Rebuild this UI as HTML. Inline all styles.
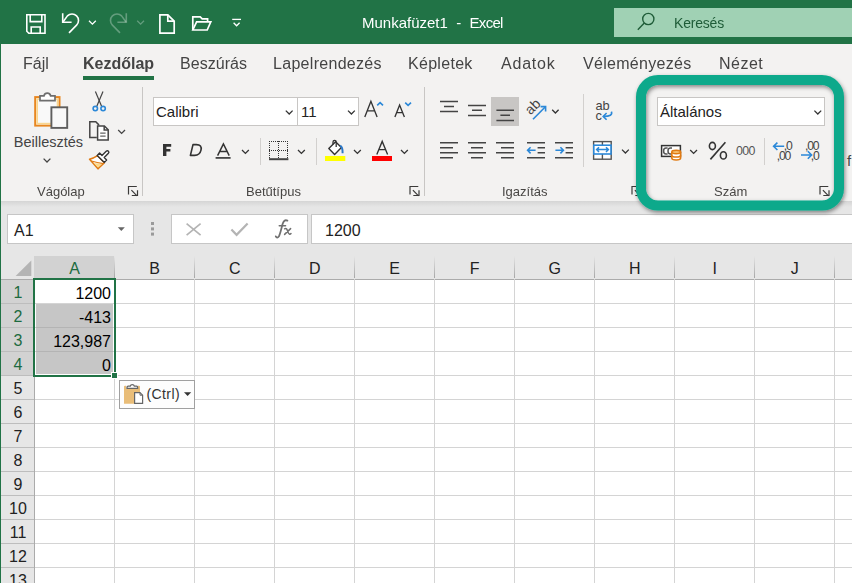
<!DOCTYPE html>
<html><head><meta charset="utf-8">
<style>
*{margin:0;padding:0;box-sizing:border-box}
html,body{width:852px;height:583px;overflow:hidden;background:#fff;font-family:"Liberation Sans",sans-serif;position:relative}
.a{position:absolute}
.t{position:absolute;white-space:nowrap;line-height:1}
svg{position:absolute;overflow:visible}
#title{left:0;top:0;width:852px;height:44px;background:#217346}
#rib{left:0;top:44px;width:852px;height:157px;background:#f3f2f1}
#fbar{left:0;top:201px;width:852px;height:55px;background:#e6e6e6}
#shadow{left:0;top:201px;width:852px;height:6px;background:linear-gradient(#d5d5d5,#e6e6e6)}
#lb{left:0;top:44px;width:1px;height:539px;background:#217346}
.tab{font-size:16px;color:#444;letter-spacing:0.3px;will-change:transform}
.lbl{font-size:13px;color:#484644;will-change:transform}
.box{background:#fff;border:1px solid #c8c6c4}
.sep{background:#c8c6c4;width:1px}
.gsep{background:#c8c6c4;width:1px}
</style></head><body>
<div id="title" class="a"></div>
<div id="rib" class="a"></div>
<div id="fbar" class="a"></div>
<div id="shadow" class="a"></div>

<!-- title bar -->
<div class="a" style="left:614px;top:8px;width:238px;height:29px;background:#a0d1b4"></div>

<!-- tabs -->
<div class="a" style="left:83px;top:76px;width:71px;height:4px;background:#217346"></div>

<!-- group separators -->
<div class="a gsep" style="left:142px;top:87px;height:109px"></div>
<div class="a gsep" style="left:424px;top:87px;height:109px"></div>

<!-- group labels -->

<!-- Font group boxes -->
<div class="a box" style="left:153px;top:97px;width:145px;height:29px"></div>
<div class="t" style="left:156px;top:104px;font-size:15px;color:#222">Calibri</div>
<div class="a box" style="left:297px;top:97px;width:62px;height:29px"></div>
<div class="t" style="left:301px;top:104px;font-size:15px;color:#222">11</div>

<!-- Number format box -->
<div class="a box" style="left:657px;top:97px;width:168px;height:29px"></div>
<div class="t" style="left:660px;top:104px;font-size:15px;color:#222">Általános</div>

<!-- formula bar -->
<div class="a box" style="left:7px;top:214px;width:127px;height:30px;border-color:#c6c6c6"></div>
<div class="t" style="left:14px;top:223px;font-size:16px;color:#222">A1</div>
<div class="a box" style="left:171px;top:214px;width:137px;height:30px;border-color:#c6c6c6"></div>
<div class="a box" style="left:311px;top:214px;width:560px;height:30px;border-color:#c6c6c6"></div>
<div class="t" style="left:325px;top:223px;font-size:16px;color:#222">1200</div>

<!-- grid placeholder -->
<div class="a" style="left:0;top:256px;width:852px;height:327px;background:#fff"></div>
<div class="a" style="left:0;top:256px;width:852px;height:23px;background:#e6e6e6"></div>
<div class="a" style="left:34px;top:256px;width:80px;height:22px;background:#d2d2d2"></div>
<div class="a" style="left:0;top:279px;width:35px;height:304px;background:#e6e6e6"></div>
<div class="a" style="left:0;top:280px;width:34px;height:95px;background:#d2d2d2"></div>
<div class="a" style="left:0;top:279px;width:852px;height:1px;background:#ababab"></div>
<div class="a" style="left:34px;top:279px;width:1px;height:304px;background:#ababab"></div>
<svg class="a" style="left:0;top:0" width="852" height="583"><path d="M31.3,260.6 V276 H15.6 Z" fill="#b4b4b4"/></svg>
<div class="a" style="left:114px;top:279px;width:1px;height:304px;background:#d4d4d4"></div>
<div class="a" style="left:114px;top:256px;width:1px;height:22px;background:linear-gradient(#e6e6e6,#a6a6a6)"></div>
<div class="a" style="left:194px;top:279px;width:1px;height:304px;background:#d4d4d4"></div>
<div class="a" style="left:194px;top:256px;width:1px;height:22px;background:linear-gradient(#e6e6e6,#a6a6a6)"></div>
<div class="a" style="left:274px;top:279px;width:1px;height:304px;background:#d4d4d4"></div>
<div class="a" style="left:274px;top:256px;width:1px;height:22px;background:linear-gradient(#e6e6e6,#a6a6a6)"></div>
<div class="a" style="left:354px;top:279px;width:1px;height:304px;background:#d4d4d4"></div>
<div class="a" style="left:354px;top:256px;width:1px;height:22px;background:linear-gradient(#e6e6e6,#a6a6a6)"></div>
<div class="a" style="left:434px;top:279px;width:1px;height:304px;background:#d4d4d4"></div>
<div class="a" style="left:434px;top:256px;width:1px;height:22px;background:linear-gradient(#e6e6e6,#a6a6a6)"></div>
<div class="a" style="left:514px;top:279px;width:1px;height:304px;background:#d4d4d4"></div>
<div class="a" style="left:514px;top:256px;width:1px;height:22px;background:linear-gradient(#e6e6e6,#a6a6a6)"></div>
<div class="a" style="left:594px;top:279px;width:1px;height:304px;background:#d4d4d4"></div>
<div class="a" style="left:594px;top:256px;width:1px;height:22px;background:linear-gradient(#e6e6e6,#a6a6a6)"></div>
<div class="a" style="left:674px;top:279px;width:1px;height:304px;background:#d4d4d4"></div>
<div class="a" style="left:674px;top:256px;width:1px;height:22px;background:linear-gradient(#e6e6e6,#a6a6a6)"></div>
<div class="a" style="left:754px;top:279px;width:1px;height:304px;background:#d4d4d4"></div>
<div class="a" style="left:754px;top:256px;width:1px;height:22px;background:linear-gradient(#e6e6e6,#a6a6a6)"></div>
<div class="a" style="left:834px;top:279px;width:1px;height:304px;background:#d4d4d4"></div>
<div class="a" style="left:834px;top:256px;width:1px;height:22px;background:linear-gradient(#e6e6e6,#a6a6a6)"></div>
<div class="a" style="left:35px;top:303px;width:817px;height:1px;background:#d4d4d4"></div>
<div class="a" style="left:0;top:303px;width:34px;height:1px;background:#bdbdbd"></div>
<div class="a" style="left:35px;top:327px;width:817px;height:1px;background:#d4d4d4"></div>
<div class="a" style="left:0;top:327px;width:34px;height:1px;background:#bdbdbd"></div>
<div class="a" style="left:35px;top:351px;width:817px;height:1px;background:#d4d4d4"></div>
<div class="a" style="left:0;top:351px;width:34px;height:1px;background:#bdbdbd"></div>
<div class="a" style="left:35px;top:375px;width:817px;height:1px;background:#d4d4d4"></div>
<div class="a" style="left:0;top:375px;width:34px;height:1px;background:#bdbdbd"></div>
<div class="a" style="left:35px;top:399px;width:817px;height:1px;background:#d4d4d4"></div>
<div class="a" style="left:0;top:399px;width:34px;height:1px;background:#bdbdbd"></div>
<div class="a" style="left:35px;top:423px;width:817px;height:1px;background:#d4d4d4"></div>
<div class="a" style="left:0;top:423px;width:34px;height:1px;background:#bdbdbd"></div>
<div class="a" style="left:35px;top:447px;width:817px;height:1px;background:#d4d4d4"></div>
<div class="a" style="left:0;top:447px;width:34px;height:1px;background:#bdbdbd"></div>
<div class="a" style="left:35px;top:471px;width:817px;height:1px;background:#d4d4d4"></div>
<div class="a" style="left:0;top:471px;width:34px;height:1px;background:#bdbdbd"></div>
<div class="a" style="left:35px;top:495px;width:817px;height:1px;background:#d4d4d4"></div>
<div class="a" style="left:0;top:495px;width:34px;height:1px;background:#bdbdbd"></div>
<div class="a" style="left:35px;top:519px;width:817px;height:1px;background:#d4d4d4"></div>
<div class="a" style="left:0;top:519px;width:34px;height:1px;background:#bdbdbd"></div>
<div class="a" style="left:35px;top:543px;width:817px;height:1px;background:#d4d4d4"></div>
<div class="a" style="left:0;top:543px;width:34px;height:1px;background:#bdbdbd"></div>
<div class="a" style="left:35px;top:567px;width:817px;height:1px;background:#d4d4d4"></div>
<div class="a" style="left:0;top:567px;width:34px;height:1px;background:#bdbdbd"></div>
<div class="a" style="left:36px;top:304px;width:77px;height:70px;background:#c6c6c6"></div>
<div class="a" style="left:36px;top:327px;width:77px;height:1px;background:#b4b4b4"></div>
<div class="a" style="left:36px;top:351px;width:77px;height:1px;background:#b4b4b4"></div>
<div class="a" style="left:33px;top:278px;width:83px;height:99px;border:2px solid #217346"></div>
<div class="a" style="left:111px;top:372px;width:7px;height:7px;background:#217346;border:1px solid #fff"></div>
<div class="t" style="left:34.7px;width:80px;text-align:center;top:261px;font-size:16px;color:#1d6b3f">A</div>
<div class="t" style="left:114.7px;width:80px;text-align:center;top:261px;font-size:16px;color:#222">B</div>
<div class="t" style="left:194.7px;width:80px;text-align:center;top:261px;font-size:16px;color:#222">C</div>
<div class="t" style="left:274.7px;width:80px;text-align:center;top:261px;font-size:16px;color:#222">D</div>
<div class="t" style="left:354.7px;width:80px;text-align:center;top:261px;font-size:16px;color:#222">E</div>
<div class="t" style="left:434.7px;width:80px;text-align:center;top:261px;font-size:16px;color:#222">F</div>
<div class="t" style="left:514.7px;width:80px;text-align:center;top:261px;font-size:16px;color:#222">G</div>
<div class="t" style="left:594.7px;width:80px;text-align:center;top:261px;font-size:16px;color:#222">H</div>
<div class="t" style="left:674.7px;width:80px;text-align:center;top:261px;font-size:16px;color:#222">I</div>
<div class="t" style="left:754.7px;width:80px;text-align:center;top:261px;font-size:16px;color:#222">J</div>
<div class="t" style="left:1px;width:34px;text-align:center;top:285px;font-size:16px;color:#1d6b3f">1</div>
<div class="t" style="left:1px;width:34px;text-align:center;top:309px;font-size:16px;color:#1d6b3f">2</div>
<div class="t" style="left:1px;width:34px;text-align:center;top:333px;font-size:16px;color:#1d6b3f">3</div>
<div class="t" style="left:1px;width:34px;text-align:center;top:357px;font-size:16px;color:#1d6b3f">4</div>
<div class="t" style="left:1px;width:34px;text-align:center;top:381px;font-size:16px;color:#222">5</div>
<div class="t" style="left:1px;width:34px;text-align:center;top:405px;font-size:16px;color:#222">6</div>
<div class="t" style="left:1px;width:34px;text-align:center;top:429px;font-size:16px;color:#222">7</div>
<div class="t" style="left:1px;width:34px;text-align:center;top:453px;font-size:16px;color:#222">8</div>
<div class="t" style="left:1px;width:34px;text-align:center;top:477px;font-size:16px;color:#222">9</div>
<div class="t" style="left:1px;width:34px;text-align:center;top:501px;font-size:16px;color:#222">10</div>
<div class="t" style="left:1px;width:34px;text-align:center;top:525px;font-size:16px;color:#222">11</div>
<div class="t" style="left:1px;width:34px;text-align:center;top:549px;font-size:16px;color:#222">12</div>
<div class="t" style="left:1px;width:34px;text-align:center;top:573px;font-size:16px;color:#222">13</div>
<div class="t" style="left:34px;width:77px;text-align:right;top:286px;font-size:16px;color:#000">1200</div>
<div class="t" style="left:34px;width:77px;text-align:right;top:310px;font-size:16px;color:#000">-413</div>
<div class="t" style="left:34px;width:77px;text-align:right;top:334px;font-size:16px;color:#000">123,987</div>
<div class="t" style="left:34px;width:77px;text-align:right;top:358px;font-size:16px;color:#000">0</div>
<div class="a" style="left:119px;top:380px;width:76px;height:29px;background:#fdfdfd;border:1px solid #a0a0a0"></div>
<svg class="a" style="left:0;top:0" width="852" height="583">
<path d="M124,386.4 Q124,385.8 125,385.8 H126 V388.8 H138 V385.8 H139 Q140,385.8 140,386.4 V403.8 H124 Z" fill="#e9bd78"/>
<path d="M127,388.4 V387.2 Q127,386.2 128.2,386.2 H130.2 A2.2,2.2 0 0 1 134.4,386.2 H136.6 Q137.6,386.2 137.6,387.2 V388.4 Z" fill="#fff" stroke="#666" stroke-width="1.3"/>
<path d="M134.6,392.6 H140 L142.6,395.2 V403.4 H134.6 Z" fill="#fff" stroke="#666" stroke-width="1.2"/>
<path d="M140,392.6 V395.2 H142.6" fill="none" stroke="#666" stroke-width="1"/>
<path d="M184,392.2 H191.2 L187.6,396 Z" fill="#333"/>
</svg>
<div class="t" style="left:146.5px;top:387px;font-size:14px;color:#333;letter-spacing:0.4px">(Ctrl)</div>


<svg class="a" style="left:0;top:0" width="852" height="583" viewBox="0 0 852 583">
<g fill="none" stroke="#fff" stroke-width="1.6">
 <!-- save -->
 <path d="M26.8,14.8 H45 V33.2 H28.8 L26.8,31.2 Z"/>
 <path d="M30.2,14.8 V21.6 H41.8 V14.8"/>
 <path d="M31.2,33.2 V27 H40.2 V33.2"/>
 <!-- undo -->
 <path d="M62.7,14 V22.3 H70.8" stroke-linecap="square"/>
 <path d="M63,22 L67.4,15.9 A6.5,6.5 0 0 1 76.6,25.1 L69,32.9"/>
 <path d="M89,20.8 L92.4,24.2 L95.8,20.8" stroke-width="1.3"/>
</g>
<g fill="none" stroke="#fff" stroke-opacity="0.3" stroke-width="1.6">
 <path d="M126.3,14 V22.3 H118.2" stroke-linecap="square"/>
 <path d="M126,22 L121.6,15.9 A6.5,6.5 0 0 0 112.4,25.1 L120,32.9"/>
 <path d="M137.2,20.8 L140.6,24.2 L144,20.8" stroke-width="1.3"/>
</g>
<g fill="none" stroke="#fff" stroke-width="1.7">
 <!-- new -->
 <path d="M159.9,14.8 H167.8 L174.2,21.2 V33.1 H159.9 Z"/>
 <path d="M167.8,14.8 V21.2 H174.2"/>
 <!-- open -->
 <path d="M192.8,30 V16.8 H200.2 L202.2,18.8 H207.6 V21.6"/>
 <path d="M192.8,30 L196.6,21.8 H210.8 L207.2,30 Z"/>
 <!-- customize -->
 <path d="M232.2,19.4 H241" stroke-width="1.3"/>
 <path d="M233.6,22.8 L236.6,25.8 L239.6,22.8" stroke-width="1.3"/>
</g>
<!-- search icon -->
<g fill="none" stroke="#1f5c38" stroke-width="1.4">
 <circle cx="648.3" cy="19" r="5.6"/>
 <path d="M644.3,23 L637.8,29.8"/>
</g>
</svg>


<svg class="a" style="left:0;top:0" width="852" height="583" viewBox="0 0 852 583">
<!-- paste big -->
<rect x="35.2" y="97.1" width="24.3" height="28.5" fill="#f9f9f9" stroke="#e8861f" stroke-width="2"/>
<rect x="37.2" y="99.1" width="20.3" height="24.5" fill="none" stroke="#fad68e" stroke-width="1.6"/>
<path d="M40,95.8 H44 A3.4,3.4 0 0 1 50.6,95.8 H55 V100.6 H40 Z" fill="#fff" stroke="#6e6e6e" stroke-width="1.7"/>
<rect x="51.4" y="107.3" width="15.8" height="20.6" fill="#f8f8f8" stroke="#5e5e5e" stroke-width="1.9"/>
<text x="13.8" y="146.8" font-size="14.5" fill="#444" font-family="Liberation Sans">Beillesztés</text>
<path d="M43.6,158.6 L47,162 L50.4,158.6" fill="none" stroke="#444" stroke-width="1.3"/>
<!-- scissors -->
<g fill="none" stroke="#444" stroke-width="1.2">
 <path d="M95.4,91.6 L101.6,106.2"/>
 <path d="M103,91.6 L96.8,106.2"/>
</g>
<g fill="none" stroke="#2b88d8" stroke-width="1.6">
 <circle cx="95.3" cy="108.6" r="2.2"/>
 <circle cx="103.1" cy="108.6" r="2.2"/>
</g>
<!-- copy -->
<g fill="none" stroke="#444" stroke-width="1.5">
 <path d="M96.8,137.6 H89.8 V121.8 H95.8 L98.6,124.6 V125.6"/>
 <path d="M97.6,126 H104.4 L108.2,129.8 V140 H97.6 Z" fill="#fff"/>
 <path d="M104.2,126 V130 H108.2"/>
 <path d="M100.2,133.2 H105.6 M100.2,136.2 H105.6" stroke-width="1.2" stroke="#666"/>
 <path d="M118.2,130 L121.6,133.4 L125,130" stroke-width="1.3"/>
</g>
<!-- format painter -->
<path d="M97.6,155.6 Q93.6,158.2 89.6,159.2 L98,168.8 L104.4,162.6 Z" fill="#fff" stroke="#e07b14" stroke-width="1.6" stroke-linejoin="round"/>
<path d="M93.6,163 L102,164 L98,167.4 Z" fill="#fbd98a"/>
<path d="M91.4,161 Q97,162.8 103.4,163.6" fill="none" stroke="#e07b14" stroke-width="1.3"/>
<path d="M97.2,155.4 L99.6,153 L102,155.4 L106.2,151.2 Q107.4,150.2 108.4,151.2 Q109.4,152.2 108.4,153.2 L104.2,157.6 L106.6,160 L104.4,162.4 Z" fill="#fff" stroke="#333" stroke-width="1.4" stroke-linejoin="round"/>
<!-- dialog launchers -->
<g fill="none" stroke="#3b3a39" stroke-width="1.2">
<path d="M128.5,194.6 V186.5 H136.8 M131.4,190.2 L137.0,195.8 M131.8,195.5 H137.5 V190.2"/>
<path d="M410.0,194.6 V186.5 H418.3 M412.9,190.2 L418.5,195.8 M413.3,195.5 H419.0 V190.2"/>
<path d="M820.0,194.6 V186.5 H828.3 M822.9,190.2 L828.5,195.8 M823.3,195.5 H829.0 V190.20000000000005"/>
<path d="M632.0,194.6 V186.5 H640.3 M634.9,190.2 L640.5,195.8 M635.3,195.5 H641.0 V190.20000000000005"/>
</g>
</svg>


<svg class="a" style="left:0;top:0" width="852" height="583" viewBox="0 0 852 583">
<g fill="none" stroke="#333" stroke-width="1.3">
 <path d="M285.8,110.6 L289.2,114 L292.6,110.6"/>
 <path d="M348,110.6 L351.4,114 L354.8,110.6"/>
</g>
<!-- grow / shrink font -->
<g fill="none" stroke="#333" stroke-width="1.35">
 <path d="M364.8,116.9 L370.9,101.3 L377.1,116.9 M367.2,110.9 H374.6"/>
 <path d="M394.9,116.9 L399.6,105 L404.4,116.9 M396.8,112.6 H402.4"/>
</g>
<g fill="none" stroke="#2b88d8" stroke-width="1.6">
 <path d="M377.2,105.4 L380.1,102.6 L383,105.4"/>
 <path d="M405.2,102.6 L408.1,105.4 L411,102.6"/>
</g>
<!-- Bold / italic / underline -->
<path d="M163,144 H171.2 V146.8 H166.4 V149 H170.4 V151.6 H166.4 V156 H163 Z" fill="#333"/>
<path d="M190.4,155.4 L193,144.6 H196.4 Q202.2,144.6 201,150.2 Q199.8,155.4 194.6,155.4 Z" fill="none" stroke="#333" stroke-width="1.6" stroke-linejoin="round"/>
<g fill="none" stroke="#333" stroke-width="1.3">
 <path d="M217.6,155.6 L223.4,143.9 L229.2,155.6 M219.6,151.4 H227.2" stroke-width="1.5"/>
</g>
<rect x="215.6" y="157" width="15" height="1.8" fill="#444"/>
<g fill="none" stroke="#333" stroke-width="1.3">
 <path d="M242,150 L245.4,153.4 L248.8,150"/>
 <path d="M298,150 L301.4,153.4 L304.8,150"/>
 <path d="M354,150 L357.4,153.4 L360.8,150"/>
 <path d="M401,150 L404.4,153.4 L407.8,150"/>
</g>
<!-- small separators -->
<rect x="260" y="138" width="1" height="27" fill="#d2d0ce"/>
<rect x="316" y="138" width="1" height="27" fill="#d2d0ce"/>
<!-- borders icon -->
<g fill="none" stroke="#333" stroke-width="1" stroke-dasharray="1,1">
 <path d="M269,141.5 H289 M269,150.5 H289 M269.5,141 V158 M278.5,141 V158 M287.5,141 V158"/>
</g>
<rect x="269" y="158.2" width="19.4" height="2" fill="#444"/>
<!-- fill color -->
<path d="M328.8,148.4 L335.6,141.8 L341.4,147.6 L334.6,154.4 Z" fill="#fff" stroke="#333" stroke-width="1.4" stroke-linejoin="round"/>
<path d="M333,144.4 V142 A1.6,1.6 0 0 1 336.2,142 V147" fill="none" stroke="#333" stroke-width="1.3"/>
<path d="M340.2,145.6 Q342.8,147 342.6,153.2" fill="none" stroke="#2b78c8" stroke-width="2"/>
<rect x="325" y="156" width="20.3" height="5" fill="#ffff00"/>
<!-- font color -->
<path d="M376.8,154.6 L382.2,141.4 L387.6,154.6 M378.9,149.6 H385.5" fill="none" stroke="#333" stroke-width="1.35"/>
<rect x="372" y="156" width="20" height="5" fill="#f00"/>
</svg>


<svg class="a" style="left:0;top:0" width="852" height="583" viewBox="0 0 852 583">
<rect x="491" y="97" width="28" height="29" fill="#c8c6c4"/>
<g fill="none" stroke="#444" stroke-width="1.5">
 <!-- top align -->
 <path d="M440,101.5 H458 M444,106.5 H454 M440,111.6 H458"/>
 <!-- middle align -->
 <path d="M468,105.4 H486 M472,110.3 H482 M468,115.4 H486"/>
 <!-- bottom align -->
 <path d="M496.4,110.3 H514 M500.4,115.3 H510 M496.4,120.4 H514"/>
 <!-- left -->
 <path d="M440,142.8 H458 M440,147.8 H453 M440,152.8 H458 M440,157.8 H453"/>
 <!-- center -->
 <path d="M468,142.8 H486 M471,147.8 H483 M468,152.8 H486 M471,157.8 H483"/>
 <!-- right -->
 <path d="M496,142.8 H514 M501,147.8 H514 M496,152.8 H514 M501,157.8 H514"/>
 <!-- decrease indent -->
 <path d="M527,142.8 H545 M537.6,147.8 H545 M537.6,152.8 H545 M527,157.8 H545"/>
 <!-- increase indent -->
 <path d="M555,142.8 H573 M565.6,147.8 H573 M565.6,152.8 H573 M555,157.8 H573"/>
</g>
<g fill="none" stroke="#2b88d8" stroke-width="1.6">
 <path d="M527.6,150.3 H535.6 M530.6,147.2 L527.6,150.3 L530.6,153.4"/>
 <path d="M555.4,150.3 H563.4 M560.4,147.2 L563.4,150.3 L560.4,153.4"/>
</g>
<!-- orientation -->
<text x="0" y="0" font-size="14" fill="#444" font-family="Liberation Sans" transform="translate(530.6,115.6) rotate(-45)">ab</text>
<g fill="none" stroke="#2b88d8" stroke-width="1.6">
 <path d="M533,119.2 L545.2,107"/>
 <path d="M540.6,106.6 H545.6 V111.6"/>
</g>
<g fill="none" stroke="#333" stroke-width="1.3">
 <path d="M552.2,109.8 L555.4,113 L558.6,109.8"/>
 <path d="M622,149.6 L625.4,153 L628.8,149.6"/>
 <path d="M690.2,150 L693.6,153.4 L697,150"/>
</g>
<!-- wrap text -->
<text x="595.4" y="110.4" font-size="12.8" fill="#444" font-family="Liberation Sans">ab</text>
<text x="595.6" y="119.8" font-size="12.8" fill="#444" font-family="Liberation Sans">c</text>
<g fill="none" stroke="#2b88d8" stroke-width="1.6">
 <path d="M611.4,111.6 Q613.2,116.4 603.6,116.4"/>
 <path d="M606.6,113 L603.2,116.4 L606.6,119.8"/>
</g>
<!-- merge -->
<rect x="593.6" y="141.6" width="17.6" height="17.6" fill="#fff" stroke="#555" stroke-width="1.4"/>
<path d="M602.4,141.6 V159.2" stroke="#555" stroke-width="1.4"/>
<rect x="593.8" y="145.2" width="17.2" height="8.8" fill="#fff" stroke="#2b88d8" stroke-width="1.6"/>
<g fill="none" stroke="#2b88d8" stroke-width="1.5">
 <path d="M596.6,149.6 H608.4 M599,147.2 L596.6,149.6 L599,152 M606,147.2 L608.4,149.6 L606,152"/>
</g>
<rect x="583" y="94" width="1" height="73" fill="#d2d0ce"/>
<!-- number group -->
<path d="M814.4,110.6 L817.8,114 L821.2,110.6" fill="none" stroke="#333" stroke-width="1.3"/>
<rect x="661.6" y="145.6" width="18.8" height="10.8" fill="#fff" stroke="#333" stroke-width="1.5"/>
<path d="M667.6,148 H666 Q663.6,148 663.6,151 Q663.6,154 666,154 H667.6 M672,148 H670.4 Q668,148 668,151 Q668,154 670.4,154 H672" fill="none" stroke="#555" stroke-width="1.5"/>
<g stroke="#e07b14" stroke-width="1.6" fill="#fff">
 <path d="M671.8,152 V158 A4.4,2 0 0 0 680.6,158 V152"/>
 <ellipse cx="676.2" cy="152" rx="4.4" ry="1.6" fill="#fbd38a"/>
 <path d="M671.8,155.2 A4.4,1.8 0 0 0 680.6,155.2" fill="none"/>
</g>
<g fill="none" stroke="#333" stroke-width="1.6">
 <ellipse cx="712.4" cy="146" rx="3" ry="3.6"/>
 <ellipse cx="723.4" cy="155.4" rx="3" ry="3.6"/>
 <path d="M725.4,142.2 L710.4,159.4"/>
</g>
<text x="736" y="155.2" font-size="12.4" fill="#555" font-family="Liberation Sans" letter-spacing="-0.6">000</text>
<rect x="764" y="138" width="1" height="27" fill="#d2d0ce"/>
<text x="783.8" y="149.8" font-size="12.2" fill="#444" font-family="Liberation Sans" letter-spacing="-1.2">,0</text>
<text x="776.8" y="159.8" font-size="12.2" fill="#444" font-family="Liberation Sans" letter-spacing="-1.2">,00</text>
<text x="805" y="149.8" font-size="12.2" fill="#444" font-family="Liberation Sans" letter-spacing="-1.2">,00</text>
<text x="810.8" y="159.8" font-size="12.2" fill="#444" font-family="Liberation Sans" letter-spacing="-1.2">,0</text>
<g fill="none" stroke="#2b88d8" stroke-width="1.6">
 <path d="M773.6,146.3 H784.2 M777.4,142.6 L773.6,146.3 L777.4,150"/>
 <path d="M801,155 H811.6 M807.8,151.3 L811.6,155 L807.8,158.7"/>
</g>
<text x="847" y="166" font-size="15" fill="#444" font-family="Liberation Sans">f</text>
</svg>


<!-- formula bar icons -->
<svg class="a" style="left:0;top:0" width="852" height="583" viewBox="0 0 852 583">
<path d="M117.8,227.2 H124.8 L121.3,231 Z" fill="#666"/>
<g fill="#9a9a9a"><rect x="151" y="222" width="3" height="3"/><rect x="151" y="227.4" width="3" height="3"/><rect x="151" y="232.6" width="3" height="3"/></g>
<g fill="none" stroke="#b4b4b4" stroke-width="1.7">
 <path d="M186.6,223.6 L200.6,235.2 M200.6,223.6 L186.6,235.2"/>
 <path d="M231.4,229.4 L236.6,234.8 L247.6,223.6" stroke-width="2.2"/>
</g>
<g fill="none" stroke="#707070" stroke-linecap="round">
 <path d="M275.8,236.4 Q277,238.8 279,236.2 Q280.4,233 282.4,224.6 Q284,219 287.4,220.6" stroke-width="1.8"/>
 <path d="M279.2,225.8 H285.6" stroke-width="1.4"/>
 <path d="M284.6,228.8 Q286.4,227.6 287.4,230.4 L288.4,233 Q289.6,235.2 291,233.6 M290.6,228.6 L284.6,234.4" stroke-width="1.5"/>
</g>
</svg>
<!-- teal highlight -->
<svg class="a" style="left:0;top:0" width="852" height="583" viewBox="0 0 852 583">
<defs><filter id="sh" x="-10%" y="-10%" width="120%" height="120%"><feGaussianBlur in="SourceAlpha" stdDeviation="2.2"/><feOffset dx="1" dy="2" result="b"/><feFlood flood-color="#000" flood-opacity="0.45"/><feComposite in2="b" operator="in"/><feMerge><feMergeNode/><feMergeNode in="SourceGraphic"/></feMerge></filter></defs>
<rect x="641" y="80" width="198" height="125.6" rx="17" ry="17" fill="none" stroke="#0aa98b" stroke-width="10" filter="url(#sh)"/>
</svg>

<div id="lb" class="a"></div>
<div class="t tab" style="left:23px;top:56px;letter-spacing:0">Fájl</div>
<div class="t tab" style="left:83px;top:56px;font-weight:bold;letter-spacing:0">Kezdőlap</div>
<div class="t tab" style="left:179.5px;top:56px;letter-spacing:0.05px">Beszúrás</div>
<div class="t tab" style="left:273px;top:56px">Lapelrendezés</div>
<div class="t tab" style="left:408px;top:56px">Képletek</div>
<div class="t tab" style="left:501px;top:56px;letter-spacing:0.8px">Adatok</div>
<div class="t tab" style="left:583px;top:56px">Véleményezés</div>
<div class="t tab" style="left:718.5px;top:56px;letter-spacing:0.5px">Nézet</div>
<div class="t lbl" style="left:37px;top:185.3px">Vágólap</div>
<div class="t lbl" style="left:246px;top:185.3px">Betűtípus</div>
<div class="t lbl" style="left:502px;top:185.3px">Igazítás</div>
<div class="t lbl" style="left:714px;top:185.3px">Szám</div>
<div class="t" style="left:362px;top:14.5px;font-size:15px;color:#fff;will-change:transform">Munkafüzet1&nbsp; - &nbsp;<span style="letter-spacing:-0.7px">Excel</span></div>
<div class="t" style="left:674px;top:15.5px;font-size:14px;color:#1f5c38;letter-spacing:-0.2px;will-change:transform">Keresés</div>
</body></html>
